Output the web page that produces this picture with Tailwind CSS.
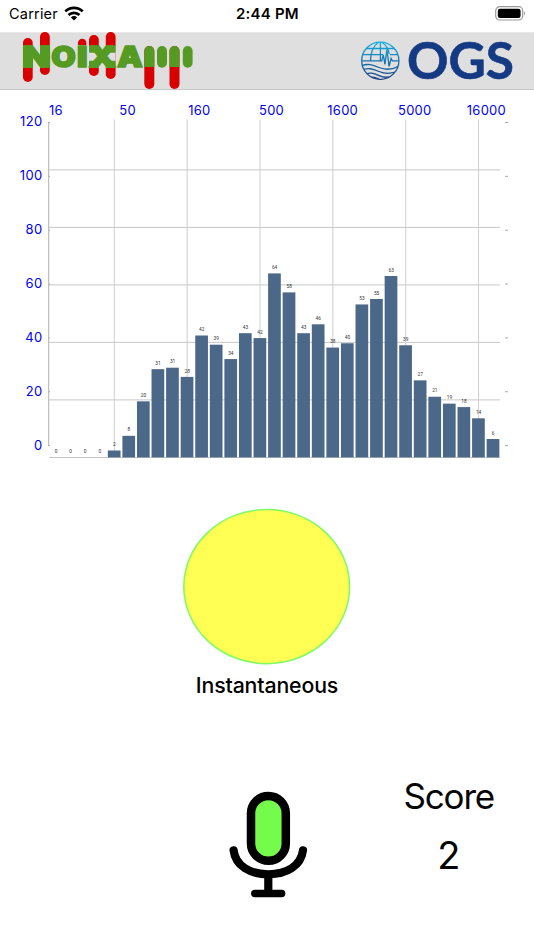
<!DOCTYPE html>
<html lang="en">
<head>
    <meta charset="UTF-8">
    <meta name="viewport" content="width=device-width, initial-scale=1.0">
    <title>NoiXapp</title>
    <script src="https://cdn.jsdelivr.net/npm/@tailwindcss/browser@4"></script>
</head>
<body class="bg-white text-black font-['Inter',sans-serif] w-[534px] h-[950px] overflow-hidden">
    <!-- Status bar -->
    <div class="h-8 grid grid-cols-3 items-center pl-[9px] pr-2 pb-1">
        <div class="flex items-center gap-[6px]">
            <span class="text-[14.5px] tracking-[0.2px]">Carrier</span>
            <svg class="w-5 h-[15px] -mt-0.5" viewBox="0 0 20 15" fill="none" stroke="#000" stroke-width="2.7">
                <path d="M1.3 5.4a12.5 12.5 0 0 1 17.4 0"/>
                <path d="M4.5 9a8 8 0 0 1 11 0"/>
                <path d="M10 14.5L6.9 11.4a4.4 4.4 0 0 1 6.2 0z" fill="#000" stroke="none"/>
            </svg>
        </div>
        <span class="text-center text-[15px] font-semibold tracking-[0.2px]">2:44 PM</span>
        <svg class="w-8 h-4 justify-self-end -mt-0.5" viewBox="0 0 32 16">
            <rect x="1.7" y="1.7" width="27" height="13.3" rx="4" fill="none" stroke="#999" stroke-width="1.2"/>
            <rect x="3.8" y="3.7" width="22.8" height="9.3" rx="2.2"/>
            <path d="M30 6.2q2 2.1 0 4.2z" fill="#999"/>
        </svg>
    </div>

    <!-- Header with logos -->
    <header class="h-[58px] flex items-start justify-between bg-[#dfdfdf] border-t border-[#e8e8e8] border-b border-b-[#c9c9c9] pl-[22px] pr-5">
        <svg class="w-[172px] h-[57px] -mt-px" viewBox="22 32 172 57">
            <g fill="#d80000">
                <rect x="23" y="38" width="9.7" height="44" rx="4.8"/>
                <rect x="40" y="32" width="9.8" height="43" rx="4.8"/>
                <path d="M78 45v-2a4.2 4.2 0 0 1 8.4 0v2z"/>
                <rect x="89" y="35" width="9.8" height="41" rx="4.8"/>
                <rect x="105.8" y="32" width="9.8" height="47" rx="4.8"/>
                <rect x="144.3" y="46" width="10" height="43" rx="5"/>
                <rect x="169.5" y="46" width="10" height="43" rx="5"/>
            </g>
            <rect x="89" y="46.3" width="9.8" height="21.5" fill="#dfdfdf"/>
            <rect x="105.8" y="46.3" width="9.8" height="21.5" fill="#dfdfdf"/>
            <g fill="#559a22">
                <rect x="23" y="45.3" width="9.7" height="22.5"/>
                <rect x="40" y="45.3" width="9.8" height="22.5"/>
                <rect x="89" y="45.7" width="9.8" height="7" rx="1"/>
                <rect x="105.8" y="45.7" width="9.8" height="7" rx="1"/>
                <rect x="89" y="60.8" width="9.8" height="7" rx="1"/>
                <rect x="105.8" y="60.8" width="9.8" height="7" rx="1"/>
                <path d="M144.3 67V51a5 5 0 0 1 10 0v16z"/>
                <rect x="157" y="46" width="10" height="21.7" rx="5"/>
                <path d="M169.5 67V51a5 5 0 0 1 10 0v16z"/>
                <rect x="182.8" y="46" width="9.8" height="21.7" rx="4.9"/>
            </g>
            <g fill="#559a22" stroke="#559a22" stroke-width="1.6" stroke-linejoin="round" font-family="Inter, sans-serif" font-weight="900" font-size="28">
                <text x="22.5" y="67" textLength="28" lengthAdjust="spacingAndGlyphs">N</text>
                <text x="51.3" y="66.8" textLength="24.5" lengthAdjust="spacingAndGlyphs">O</text>
                <text x="77" y="67" textLength="10.5" lengthAdjust="spacingAndGlyphs">I</text>
                <text x="88.5" y="67" textLength="27.6" lengthAdjust="spacingAndGlyphs">X</text>
                <text x="117.3" y="67" textLength="25.4" lengthAdjust="spacingAndGlyphs">A</text>
            </g>
        </svg>
        <svg class="w-[153px] h-[48px] mt-[7px] overflow-visible" viewBox="361 40 153 48">
            <defs>
                <linearGradient id="globe" gradientUnits="userSpaceOnUse" x1="0" y1="41" x2="0" y2="80">
                    <stop offset="0" stop-color="#10b4e6"/>
                    <stop offset="1" stop-color="#173a80"/>
                </linearGradient>
                <clipPath id="disc"><circle cx="380.3" cy="60.7" r="18.5"/></clipPath>
            </defs>
            <g fill="none" stroke="url(#globe)" stroke-width="1.3">
                <circle cx="380.3" cy="60.7" r="18.6"/>
                <g clip-path="url(#disc)">
                    <path d="M366 48.5h29M363 54.7h20M390 54.7h9"/>
                    <path d="M361 60.9h20.7l1.6-6 1.6 9.5 2-15 2.2 17 2-8 1.2 2.5h7"/>
                    <path d="M380.4 42v19.2M379 42c-6 4-8.5 12-8.5 19M381.5 42c5 3 7 7 7.8 12"/>
                    <path d="M361 66c7-3 12-1 18 1.5s12 3 20-1.5"/>
                    <path d="M361 70.5c7-3.5 12-1.5 18 1s12 3 20-1"/>
                    <path d="M363 74.8c7-3 11-1.5 16 .8s10 2.5 17-.6"/>
                    <path d="M367 78c5-2 8-.5 12 1"/>
                </g>
            </g>
            <text x="407" y="78.8" font-family="Lato, sans-serif" font-weight="700" font-size="51" fill="#153a84" stroke="#153a84" stroke-width="0.6" textLength="107" lengthAdjust="spacingAndGlyphs">OGS</text>
        </svg>
    </header>

    <main class="flex flex-col">
        <svg id="chart" class="w-[534px] h-[380px]" viewBox="0 90 534 380"></svg>

        <div class="flex flex-col items-center pt-[38px]">
            <svg class="w-[168px] h-[157px]" viewBox="0 0 168 157">
                <ellipse cx="83.7" cy="78.6" rx="82.9" ry="77.1" fill="#ffff54" stroke="#7dfb62" stroke-width="1.5"/>
            </svg>
            <span class="text-[21.3px] leading-[26px] font-medium mt-[7px] tracking-[-0.15px]">Instantaneous</span>
        </div>

        <div class="flex justify-between pt-[74px] pl-[227px] pr-10">
            <svg class="w-[82px] h-[110px] mt-[18px]" viewBox="227 790 82 110">
                <rect x="251" y="796" width="34.8" height="64.8" rx="17.4" fill="#75fb4c" stroke="#000" stroke-width="8.5"/>
                <g fill="none" stroke="#000" stroke-width="8.2" stroke-linecap="round">
                    <path d="M233.6 850.3C235.5 866 250 874.3 268.3 874.3S301 866 303 850.3"/>
                    <path d="M268.3 876v15" stroke-linecap="butt"/>
                    <path d="M254.8 893.5h26.8" stroke-width="7.5"/>
                </g>
            </svg>
            <div class="flex flex-col items-center text-[#050505] pt-px">
                <span class="text-[35px] leading-[46px] tracking-[-1.2px]">Score</span>
                <span class="text-[38px] leading-[46px] mt-[13px]">2</span>
            </div>
        </div>
    </main>

    <script>
        // label and measured level of every third-octave band
        var bands = [
            [0, 0], [0, 0], [0, 0], [0, 0], [2, 2.4], [8, 7.5], [20, 19.5], [31, 30.7], [31, 31.2], [28, 28],
            [42, 42.4], [39, 39.2], [34, 34.2], [43, 43.2], [42, 41.5], [64, 64], [58, 57.4], [43, 43.2], [46, 46.3], [38, 38.2],
            [40, 39.7], [53, 53.2], [55, 55.1], [63, 63.1], [39, 39], [27, 26.8], [21, 21.1], [19, 18.7], [18, 17.5], [14, 13.6], [6, 6.4]
        ];
        var left = 48.75, step = 14.57, bottom = 457.4, unit = 2.875;
        var svg = '';

        // Horizontal grid
        for (var v = 20; v <= 100; v += 20) {
            var gy = bottom - v * unit;
            svg += '<path d="M49 ' + gy + 'H500" stroke="#c8c8c8"/>';
        }
        // Vertical grid
        for (var i = 4; i < 31; i += 5) {
            svg += '<path d="M' + (left + step * (i + 0.5)) + ' 119.5V457" stroke="#cecece"/>';
        }
        svg += '<path d="M48.7 122V446" stroke="#b0b0b0"/><path d="M49 457.5H500" stroke="#c4c4c4"/>';

        // Bars
        bands.forEach(function (band, i) {
            var x = left + step * i;
            var h = band[1] * unit;
            if (h > 0) {
                svg += '<rect x="' + (x + 0.8) + '" y="' + (bottom - h) + '" width="12.7" height="' + h + '" fill="#4b6888"/>';
            }
            svg += '<text x="' + (x + 7.3) + '" y="' + (bottom - h - 4.4) + '" text-anchor="middle" font-size="4.8" font-family="Roboto, sans-serif" fill="#333">' + band[0] + '</text>';
        });

        // Axis labels
        [120, 100, 80, 60, 40, 20, 0].forEach(function (n, i) {
            var y = 122.5 + i * 53.85;
            svg += '<text x="42.5" y="' + (y + 3.9) + '" text-anchor="end" font-size="13" letter-spacing="0.35" fill="#0000f0">' + n + '</text>';
            svg += '<path d="M505 ' + y + 'h3" stroke="#aaa"/><path d="M48.5 ' + y + 'h1.5" stroke="#aaa"/>';
        });
        [[16, 49], [50, 119.3], [160, 188.2], [500, 259], [1600, 327.3], [5000, 398], [16000, 466.8]].forEach(function (t) {
            svg += '<text x="' + t[1] + '" y="115" font-size="13" letter-spacing="0.25" fill="#0000f0">' + t[0] + '</text>';
        });
        document.getElementById('chart').innerHTML = svg;
    </script>
</body>
</html>
